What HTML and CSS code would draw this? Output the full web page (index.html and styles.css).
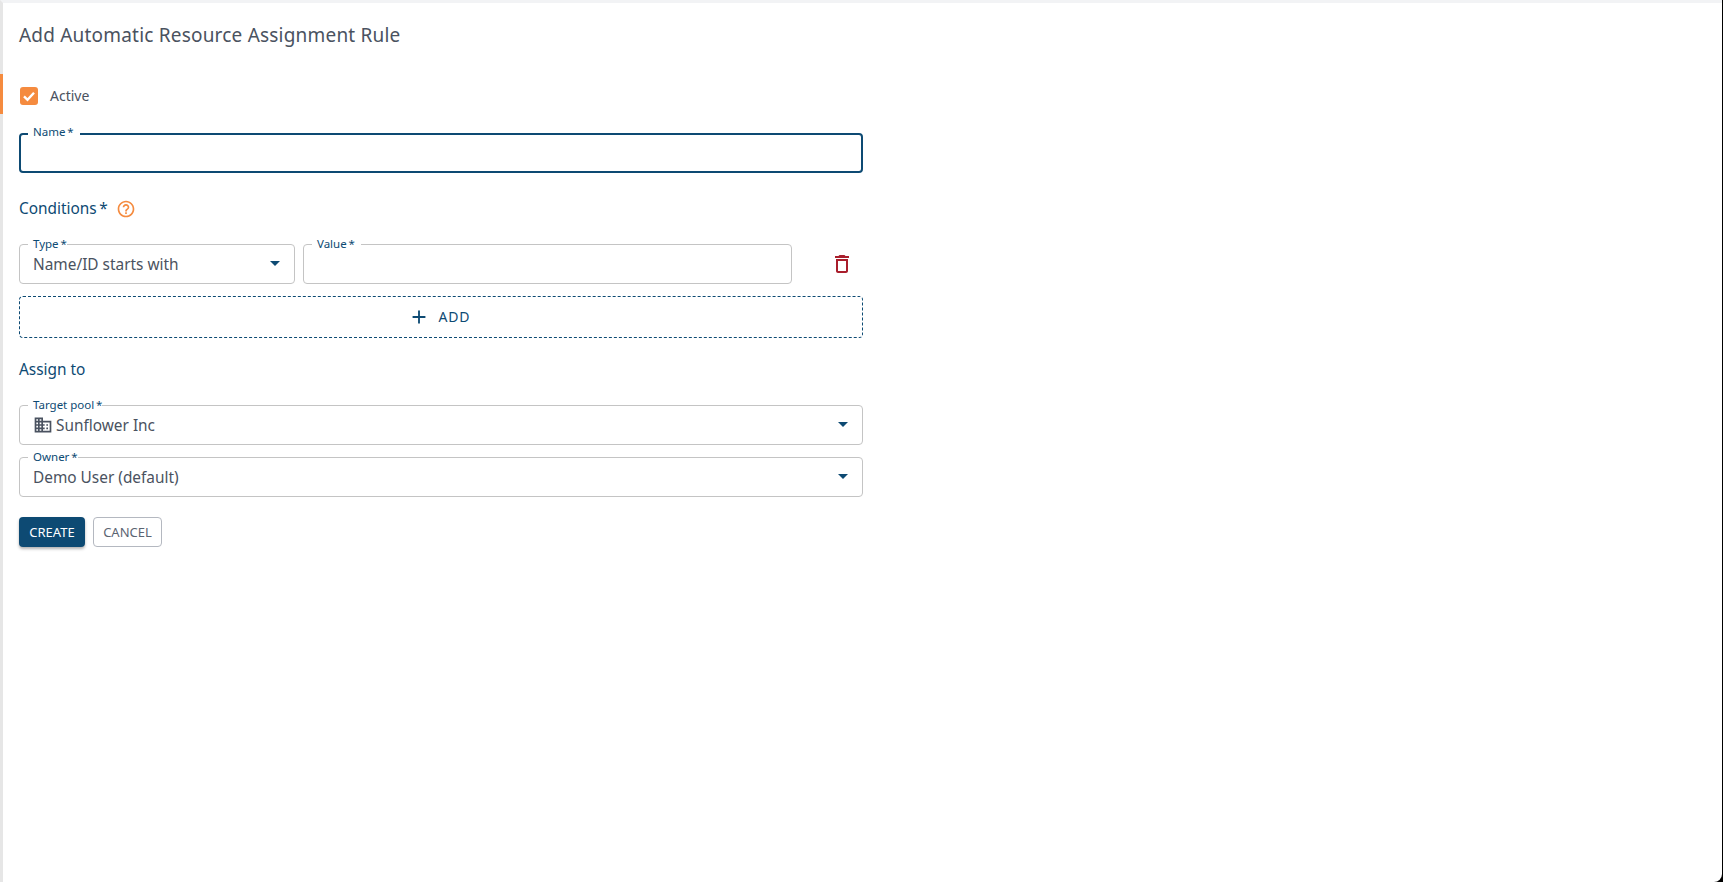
FILE: index.html
```html
<!DOCTYPE html>
<html lang="en">
<head>
<meta charset="utf-8">
<title>Add Automatic Resource Assignment Rule</title>
<link rel="stylesheet" href="styles.css">
</head>
<body>
<div class="frame">
  <span class="accent"></span>
  <main class="page">
    <h1 class="title">Add Automatic Resource Assignment Rule</h1>
    <form class="form">
      <label class="check">
        <span class="box"><svg viewBox="0 0 18 18" width="18" height="18"><path d="M4 9.400l3.500 3.400L14 5.800" fill="none" stroke="#fff" stroke-width="2.400"/></svg></span>
        <span class="check-text">Active</span>
      </label>
      <div class="field focused">
        <span class="legend wide">Name&thinsp;*</span>
      </div>
      <div class="section conditions-head">
        <span>Conditions&thinsp;*</span>
        <svg class="help" viewBox="0 0 24 24" width="20" height="20"><path fill="#f58b3f" d="M11 18h2v-2h-2v2zm1-16C6.480 2 2 6.480 2 12s4.480 10 10 10 10-4.480 10-10S17.520 2 12 2zm0 18c-4.410 0-8-3.590-8-8s3.590-8 8-8 8 3.590 8 8-3.590 8-8 8zm0-14c-2.210 0-4 1.790-4 4h2c0-1.100.9-2 2-2s2 .9 2 2c0 2-3 1.750-3 5h2c0-2.250 3-2.500 3-5 0-2.210-1.790-4-4-4z"/></svg>
      </div>
      <div class="condition">
        <div class="field type">
          <span class="legend">Type&thinsp;*</span>
          <span class="value">Name/ID starts with</span>
          <span class="caret"></span>
        </div>
        <div class="field val">
          <span class="legend wide">Value&thinsp;*</span>
        </div>
        <div class="trash">
          <svg viewBox="0 0 24 24" width="24" height="24"><path fill="#a91e2c" d="M16 9v10H8V9h8m-1.500-6h-5l-1 1H5v2h14V4h-3.500l-1-1zM18 7H6v12c0 1.100.9 2 2 2h8c1.100 0 2-.9 2-2V7z"/></svg>
        </div>
      </div>
      <button class="add" type="button">
        <svg viewBox="0 0 24 24" width="22" height="22"><path fill="#0d4a73" d="M19 13h-6v6h-2v-6H5v-2h6V5h2v6h6v2z"/></svg>
        <span>ADD</span>
      </button>
      <div class="section assign">Assign to</div>
      <div class="field pool">
        <span class="legend">Target pool&thinsp;*</span>
        <svg class="org" viewBox="0 0 24 24" width="20" height="20"><path fill="#4a5260" d="M12 7V3H2v18h20V7H12zM6 19H4v-2h2v2zm0-4H4v-2h2v2zm0-4H4V9h2v2zm0-4H4V5h2v2zm4 12H8v-2h2v2zm0-4H8v-2h2v2zm0-4H8V9h2v2zm0-4H8V5h2v2zm10 12h-8v-2h2v-2h-2v-2h2v-2h-2V9h8v10zm-2-8h-2v2h2v-2zm0 4h-2v2h2v-2z"/></svg>
        <span class="value">Sunflower Inc</span>
        <span class="caret"></span>
      </div>
      <div class="field owner">
        <span class="legend">Owner&thinsp;*</span>
        <span class="value">Demo User (default)</span>
        <span class="caret"></span>
      </div>
      <div class="actions">
        <button class="btn primary" type="button">CREATE</button>
        <button class="btn ghost" type="button">CANCEL</button>
      </div>
    </form>
  </main>
</div>
</body>
</html>
```

FILE: styles.css
```css
* { box-sizing: border-box; }
html, body { margin: 0; height: 100%; background: #000; }
body { font-family: "Noto Sans", "Open Sans", sans-serif; color: #4a5260; overflow: hidden; }
.frame {
  position: relative;
  width: 1722px;
  height: 882px;
  background: #fff;
  border-top: 3px solid #f2f3f5;
  border-left: 3px solid #e6e6e6;
  border-bottom-right-radius: 8px;
}
.accent { position: absolute; left: -3px; top: 71px; width: 3px; height: 40px; background: #f58b3f; }
.page { padding: 0 16px; width: 876px; }
.title { margin: 0; padding-top: 19px; height: 71px; font-size: 19px; line-height: 26px; font-weight: 400; letter-spacing: .2px; color: #4a5260; }
.form { display: flex; flex-direction: column; }
.check { display: flex; align-items: center; height: 24px; margin-top: 10px; }
.box { width: 18px; height: 18px; margin-left: 1px; border-radius: 3px; background: #f58b3f; display: block; }
.box svg { display: block; }
.check-text { margin-left: 12px; margin-top: -2px; font-size: 14px; }
.field {
  position: relative;
  display: flex;
  align-items: center;
  flex: none;
  height: 40px;
  margin-top: 12px;
  padding: 0 13px;
  border: 1px solid #c4c4c4;
  border-radius: 4px;
  font-size: 15.4px;
}
.focused { margin-top: 25px; border: 2px solid #0d4a73; }
.legend {
  position: absolute;
  left: 8px;
  top: -8px;
  padding: 0 0 0 5px;
  background: #fff;
  font-size: 11.5px;
  line-height: 13px;
  color: #0d4a73;
}
.legend.wide { padding-right: 6px; }
.focused .legend { left: 7px; top: -10px; }
.section { font-size: 15.4px; line-height: 22px; color: #0d4a73; }
.conditions-head { display: flex; align-items: center; gap: 8px; margin-top: 25px; height: 22px; }
.help { display: block; }
.condition { display: flex; margin-top: 24px; }
.condition .field { margin-top: 0; }
.type { width: 276px; }
.val { width: 489px; margin-left: 8px; }
.trash { width: 71px; flex: none; display: flex; align-items: center; padding-left: 38px; }
.trash svg { display: block; flex: none; }
.value { white-space: nowrap; }
.caret {
  position: absolute;
  right: 14px;
  top: 16px;
  width: 0;
  height: 0;
  border-left: 5px solid transparent;
  border-right: 5px solid transparent;
  border-top: 5px solid #0d4a73;
}
.org { margin-right: 3px; flex: none; }
.add {
  display: flex;
  align-items: center;
  justify-content: center;
  gap: 9px;
  width: 844px;
  height: 42px;
  margin-top: 12px;
  padding: 0 4px 2px 0;
  border: 1px dashed #0d4a73;
  border-radius: 4px;
  background: #fff;
  color: #0d4a73;
  font: 14px "Noto Sans", sans-serif;
  letter-spacing: .8px;
}
.add svg { display: block; margin-top: 2px; }
.assign { margin-top: 21px; }
.pool { margin-top: 24px; }
.owner { margin-top: 12px; }
.actions { display: flex; gap: 8px; margin-top: 20px; }
.btn { height: 30px; border-radius: 4px; font: 13px "Noto Sans", sans-serif; padding: 0; }
.primary { width: 66px; border: 0; background: #0d4a73; color: #fff; box-shadow: 0 2px 3px rgba(0,0,0,.3); }
.ghost { width: 69px; border: 1px solid #b4b8c0; background: #fff; color: #5b6472; }
```
